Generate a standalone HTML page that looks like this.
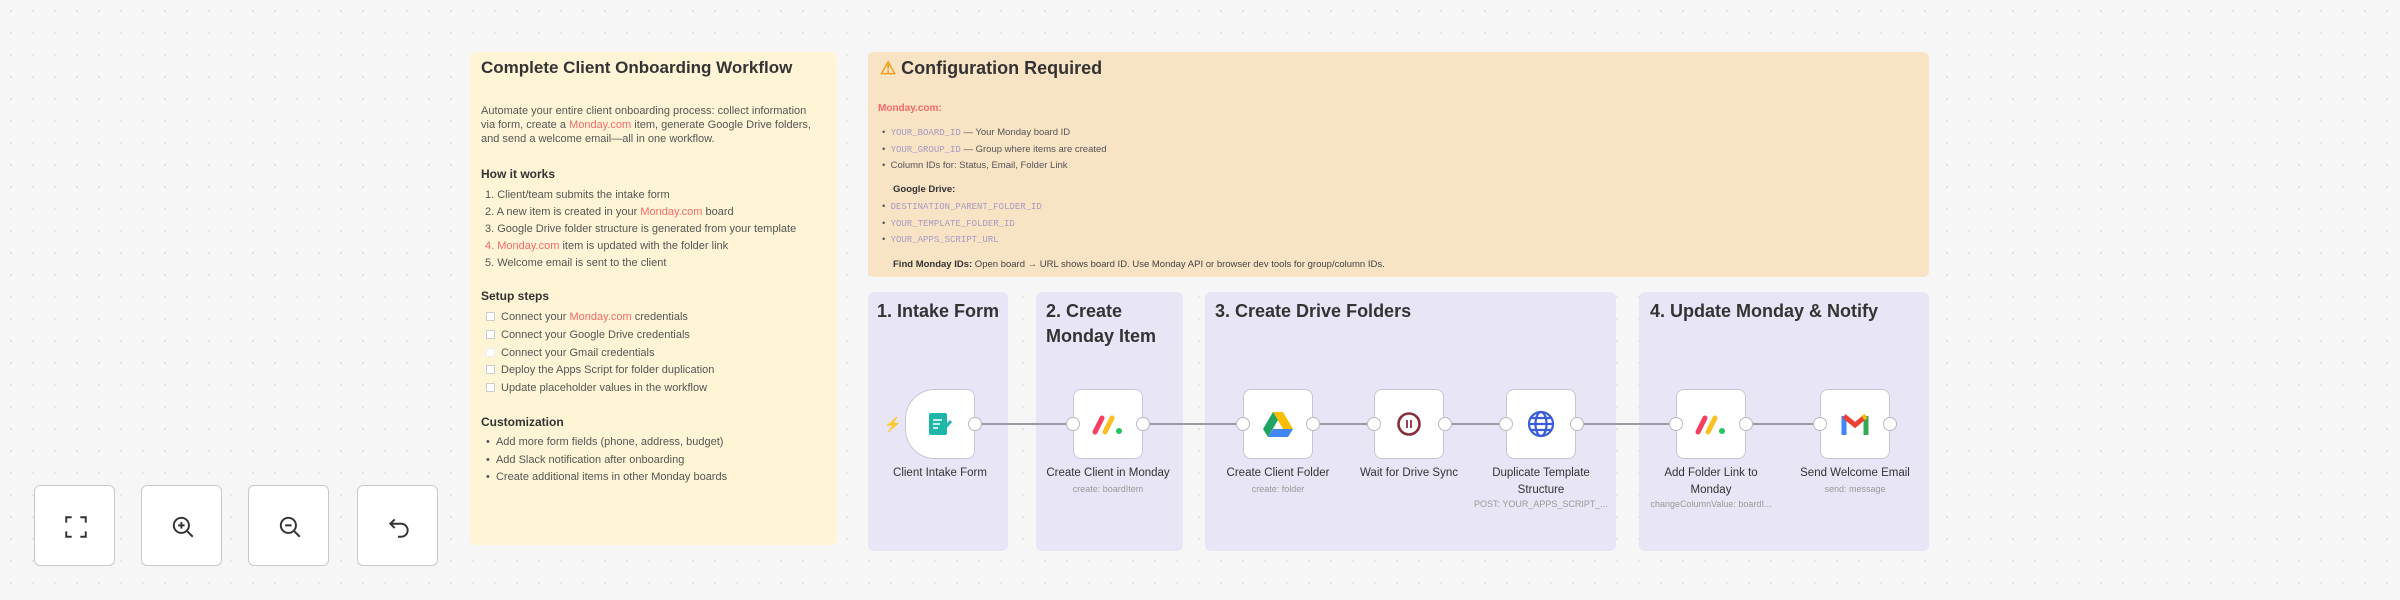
<!DOCTYPE html>
<html><head><meta charset="utf-8"><style>
*{margin:0;padding:0;box-sizing:border-box}
body{width:2400px;height:600px;overflow:hidden;background:#f6f6f6;font-family:"Liberation Sans",sans-serif;position:relative;color:#333}
.bg{position:absolute;inset:0;background-image:radial-gradient(#e2e2e2 1px,transparent 1.2px);background-size:22px 22px}
.a{position:absolute}
.sticky{position:absolute;border-radius:6px}
.t{position:absolute;white-space:nowrap;font-size:11px;color:#555}
.h{position:absolute;white-space:nowrap;font-weight:bold;color:#333}
.red{color:#f26a6a}
.code{color:#a89bc4;font-family:"Liberation Mono",monospace;font-size:9px}
.btn{position:absolute;top:485px;width:81px;height:81px;border:1px solid #c9c9c9;border-radius:6px;background:#fff}
.btn svg{position:absolute;left:28px;top:28px}
.node{position:absolute;top:389px;width:70px;height:70px;background:#fff;border:1.5px solid #c8c6d4;border-radius:8px}
.dot{position:absolute;width:14px;height:14px;border-radius:50%;background:#fff;border:1.5px solid #b8b8c0;top:417px}
.line{position:absolute;height:2px;background:#9a9aa5;top:423px}
.lbl{position:absolute;width:160px;text-align:center;font-size:11.5px;color:#333;line-height:17px}
.sub{position:absolute;width:160px;text-align:center;font-size:9px;color:#999}
.gt{position:absolute;font-size:18px;font-weight:bold;color:#333;line-height:25px}
.cb{display:inline-block;width:9px;height:9px;border:1px solid #ccc;background:#fff;margin-right:6px;vertical-align:-1px;border-radius:1px}
</style></head><body>
<div class="bg"></div>

<!-- buttons -->
<div class="btn" style="left:34px"><svg width="26" height="26" viewBox="0 0 24 24" fill="none" stroke="#333" stroke-width="1.8"><path d="M3 8V3h5M16 3h5v5M21 16v5h-5M8 21H3v-5"/></svg></div>
<div class="btn" style="left:141px"><svg width="26" height="26" viewBox="0 0 24 24" fill="none" stroke="#333" stroke-width="1.8"><circle cx="10.5" cy="10.5" r="7"/><path d="M16 16l5 5M7.5 10.5h6M10.5 7.5v6"/></svg></div>
<div class="btn" style="left:248px"><svg width="26" height="26" viewBox="0 0 24 24" fill="none" stroke="#333" stroke-width="1.8"><circle cx="10.5" cy="10.5" r="7"/><path d="M16 16l5 5M7.5 10.5h6"/></svg></div>
<div class="btn" style="left:357px"><svg width="26" height="26" viewBox="0 0 24 24" fill="none" stroke="#333" stroke-width="1.8"><path d="M8 5L4 9l4 4"/><path d="M4 9h10a6 6 0 010 12h-3"/></svg></div>

<!-- left sticky -->
<div class="sticky" style="left:470px;top:52px;width:367px;height:493px;background:#fff5d6"></div>
<div class="h" style="left:481px;top:58px;font-size:17px">Complete Client Onboarding Workflow</div>
<div class="t" style="left:481px;top:104px;line-height:14px">Automate your entire client onboarding process: collect information<br>via form, create a <span class="red">Monday.com</span> item, generate Google Drive folders,<br>and send a welcome email—all in one workflow.</div>
<div class="h" style="left:481px;top:167px;font-size:12px">How it works</div>
<div class="t" style="left:485px;top:187px;line-height:17px">1. Client/team submits the intake form<br>2. A new item is created in your <span class="red">Monday.com</span> board<br>3. Google Drive folder structure is generated from your template<br><span class="red">4. Monday.com</span> item is updated with the folder link<br>5. Welcome email is sent to the client</div>
<div class="h" style="left:481px;top:289px;font-size:12px">Setup steps</div>
<div class="t" style="left:486px;top:309px;line-height:17.8px"><span class="cb"></span>Connect your <span class="red">Monday.com</span> credentials<br><span class="cb"></span>Connect your Google Drive credentials<br><span class="cb" style="border-color:#eee"></span>Connect your Gmail credentials<br><span class="cb"></span>Deploy the Apps Script for folder duplication<br><span class="cb"></span>Update placeholder values in the workflow</div>
<div class="h" style="left:481px;top:415px;font-size:12px">Customization</div>
<div class="t" style="left:486px;top:434px;line-height:17.5px">•&nbsp;&nbsp;Add more form fields (phone, address, budget)<br>•&nbsp;&nbsp;Add Slack notification after onboarding<br>•&nbsp;&nbsp;Create additional items in other Monday boards</div>

<!-- config sticky -->
<div class="sticky" style="left:868px;top:52px;width:1061px;height:225px;background:#f8e3c4"></div>
<div class="h" style="left:880px;top:58px;font-size:18px"><span style="color:#f0a020">⚠</span> Configuration Required</div>
<div class="t" style="left:878px;top:103px;font-weight:bold;color:#f26a6a;font-size:10px">Monday.com:</div>
<div class="t" style="left:882px;top:125px;line-height:15.5px;font-size:9.5px">•&nbsp; <span class="code">YOUR_BOARD_ID</span> — Your Monday board ID<br>•&nbsp; <span class="code">YOUR_GROUP_ID</span> — Group where items are created<br>•&nbsp; Column IDs for: Status, Email, Folder Link</div>
<div class="t" style="left:893px;top:184px;font-weight:bold;color:#333;font-size:9.5px">Google Drive:</div>
<div class="t" style="left:882px;top:199px;line-height:16.5px;font-size:9.5px">•&nbsp; <span class="code">DESTINATION_PARENT_FOLDER_ID</span><br>•&nbsp; <span class="code">YOUR_TEMPLATE_FOLDER_ID</span><br>•&nbsp; <span class="code">YOUR_APPS_SCRIPT_URL</span></div>
<div class="t" style="left:893px;top:259px;font-size:9.5px;color:#444"><b style="color:#333">Find Monday IDs:</b> Open board → URL shows board ID. Use Monday API or browser dev tools for group/column IDs.</div>

<!-- groups -->
<div class="sticky" style="left:868px;top:292px;width:140px;height:259px;background:#e8e5f6"></div>
<div class="sticky" style="left:1036px;top:292px;width:147px;height:259px;background:#e8e5f6"></div>
<div class="sticky" style="left:1205px;top:292px;width:411px;height:259px;background:#e8e5f6"></div>
<div class="sticky" style="left:1639px;top:292px;width:290px;height:259px;background:#e8e5f6"></div>
<div class="gt" style="left:877px;top:299px">1. Intake Form</div>
<div class="gt" style="left:1046px;top:299px">2. Create<br>Monday Item</div>
<div class="gt" style="left:1215px;top:299px">3. Create Drive Folders</div>
<div class="gt" style="left:1650px;top:299px">4. Update Monday &amp; Notify</div>

<!-- lines -->
<div class="line" style="left:982px;width:84px"></div>
<div class="line" style="left:1150px;width:86px"></div>
<div class="line" style="left:1320px;width:47px"></div>
<div class="line" style="left:1452px;width:47px"></div>
<div class="line" style="left:1584px;width:85px"></div>
<div class="line" style="left:1753px;width:60px"></div>

<!-- nodes -->
<div class="node" style="left:905px;border-radius:30px 8px 8px 30px"></div>
<div class="a" style="left:884px;top:416px;color:#f26a4a;font-size:14px">⚡</div>
<svg class="a" style="left:925px;top:409px" width="30" height="30" viewBox="0 0 30 30"><rect x="4" y="4" width="18" height="22" rx="2" fill="#1fb8a8"/><path d="M8 11h9M8 15h7M8 19h5" stroke="#fff" stroke-width="1.6"/><path d="M17 22l9-10" stroke="#1fb8a8" stroke-width="3"/></svg>
<div class="node" style="left:1073px"></div>
<svg class="a" style="left:1089px;top:410px" width="38" height="28" viewBox="0 0 38 28"><path d="M6 22L13 8" stroke="#f43f5e" stroke-width="5" stroke-linecap="round"/><path d="M16 22L23 8" stroke="#fbbf24" stroke-width="5" stroke-linecap="round"/><circle cx="30" cy="21" r="3" fill="#22c55e"/></svg>
<div class="node" style="left:1243px"></div>
<svg class="a" style="left:1262px;top:410px" width="32" height="28" viewBox="0 0 32 28"><path d="M11 2h10l10 17H21z" fill="#fbbc04"/><path d="M11 2L1 19l5 8L16 10z" fill="#1fa463"/><path d="M6 27h20l5-8H11z" fill="#4285f4"/></svg>
<div class="node" style="left:1374px"></div>
<svg class="a" style="left:1396px;top:411px" width="26" height="26" viewBox="0 0 26 26"><circle cx="13" cy="13" r="10.5" fill="none" stroke="#8b2c3a" stroke-width="2.6"/><path d="M11 9v8M15 9v8" stroke="#8b2c3a" stroke-width="1.8"/></svg>
<div class="node" style="left:1506px"></div>
<svg class="a" style="left:1527px;top:410px" width="28" height="28" viewBox="0 0 28 28" fill="none" stroke="#3b5bdb" stroke-width="2.2"><circle cx="14" cy="14" r="12"/><ellipse cx="14" cy="14" rx="5.5" ry="12"/><path d="M2 14h24M4 8h20M4 20h20"/></svg>
<div class="node" style="left:1676px"></div>
<svg class="a" style="left:1692px;top:410px" width="38" height="28" viewBox="0 0 38 28"><path d="M6 22L13 8" stroke="#f43f5e" stroke-width="5" stroke-linecap="round"/><path d="M16 22L23 8" stroke="#fbbf24" stroke-width="5" stroke-linecap="round"/><circle cx="30" cy="21" r="3" fill="#22c55e"/></svg>
<div class="node" style="left:1820px"></div>
<svg class="a" style="left:1841px;top:411px" width="28" height="26" viewBox="0 0 28 26"><path d="M3 24V5" stroke="#4285f4" stroke-width="5"/><path d="M25 24V5" stroke="#34a853" stroke-width="5"/><path d="M3 5l11 9 11-9" stroke="#ea4335" stroke-width="5" fill="none"/><path d="M25 5l-3 2" stroke="#fbbc04" stroke-width="5"/></svg>

<!-- dots -->
<div class="dot" style="left:968px"></div>
<div class="dot" style="left:1066px"></div><div class="dot" style="left:1136px"></div>
<div class="dot" style="left:1236px"></div><div class="dot" style="left:1306px"></div>
<div class="dot" style="left:1367px"></div><div class="dot" style="left:1438px"></div>
<div class="dot" style="left:1499px"></div><div class="dot" style="left:1570px"></div>
<div class="dot" style="left:1669px"></div><div class="dot" style="left:1739px"></div>
<div class="dot" style="left:1813px"></div><div class="dot" style="left:1883px"></div>

<!-- labels -->
<div class="lbl" style="left:860px;top:465px">Client Intake Form</div>
<div class="lbl" style="left:1028px;top:465px">Create Client in Monday</div>
<div class="sub" style="left:1028px;top:484px">create: boardItem</div>
<div class="lbl" style="left:1198px;top:465px">Create Client Folder</div>
<div class="sub" style="left:1198px;top:484px">create: folder</div>
<div class="lbl" style="left:1329px;top:465px">Wait for Drive Sync</div>
<div class="lbl" style="left:1461px;top:465px">Duplicate Template<br>Structure</div>
<div class="sub" style="left:1461px;top:499px">POST: YOUR_APPS_SCRIPT_...</div>
<div class="lbl" style="left:1631px;top:465px">Add Folder Link to<br>Monday</div>
<div class="sub" style="left:1631px;top:499px">changeColumnValue: boardI...</div>
<div class="lbl" style="left:1775px;top:465px">Send Welcome Email</div>
<div class="sub" style="left:1775px;top:484px">send: message</div>
</body></html>
